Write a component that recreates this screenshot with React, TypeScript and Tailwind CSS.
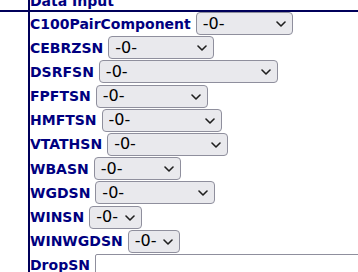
import React from "react";

type Field = { label: string; width: string; kind?: "select" | "text" };

const fields: Field[] = [
  { label: "C100PairComponent", width: "w-[97px]" },
  { label: "CEBRZSN", width: "w-[106px]" },
  { label: "DSRFSN", width: "w-[179px]" },
  { label: "FPFTSN", width: "w-[112px]" },
  { label: "HMFTSN", width: "w-[120px]" },
  { label: "VTATHSN", width: "w-[121px]" },
  { label: "WBASN", width: "w-[87px]" },
  { label: "WGDSN", width: "w-[120px]" },
  { label: "WINSN", width: "w-[53px]" },
  { label: "WINWGDSN", width: "w-[52px]" },
  { label: "DropSN", width: "w-[300px]", kind: "text" },
];

function Dropdown({ width }: { width: string }) {
  return (
    <span className={`relative inline-flex shrink-0 ${width}`}>
      <select className="h-[23px] w-full appearance-none rounded-[4px] border border-[#8f8f9d] bg-[#e9e9ed] pl-[6px] pr-5 font-['DejaVu_Sans',sans-serif] text-[16px] font-normal leading-none text-black">
        <option>-0-</option>
      </select>
      <svg
        className="pointer-events-none absolute right-[7px] top-[9px]"
        width="10"
        height="6"
        viewBox="0 0 10 6"
        fill="none"
      >
        <path d="M1 1l4 4 4-4" stroke="#1f1f1f" strokeWidth={1.6} strokeLinecap="round" strokeLinejoin="round" />
      </svg>
    </span>
  );
}

export default function App() {
  return (
    <div className="h-[272px] w-[358px] overflow-hidden bg-white font-['DejaVu_Sans',sans-serif] text-[14px] font-bold text-[#000080]">
      <div className="-mt-[8px] flex border-b-2 border-[#00005a]">
        <div className="w-[30px] shrink-0 border-r-2 border-[#00005a]" />
        <div className="leading-[18px]">Data Input</div>
      </div>
      <div className="flex">
        <div className="w-[30px] shrink-0 border-r-2 border-[#00005a]" />
        <div className="flex flex-col gap-[1.2px]">
          {fields.map((f) => (
            <div key={f.label} className="flex h-[23px] items-center gap-[5px]">
              <span className="whitespace-nowrap leading-none">{f.label}</span>
              {f.kind === "text" ? (
                <input
                  type="text"
                  className={`h-[23px] shrink-0 ${f.width} rounded-[2px] border border-[#8f8f9d] bg-white`}
                />
              ) : (
                <Dropdown width={f.width} />
              )}
            </div>
          ))}
        </div>
      </div>
    </div>
  );
}
